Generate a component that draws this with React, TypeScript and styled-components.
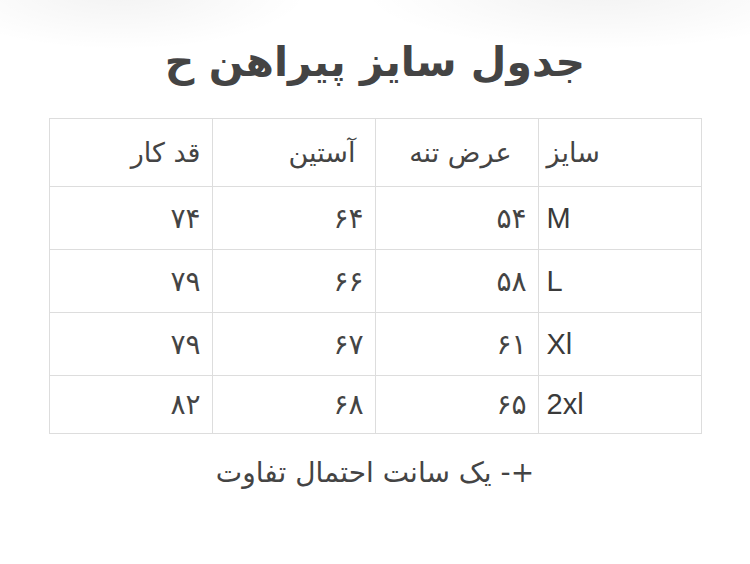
import React from 'react';
import styled, { createGlobalStyle } from 'styled-components';

const GlobalStyle = createGlobalStyle`
  html, body {
    margin: 0;
    padding: 0;
    background: #fff;
  }
  body {
    font-family: "DejaVu Sans", "Noto Sans", sans-serif;
    color: #444;
  }
`;

const Page = styled.div`
  width: 750px;
  height: 564px;
  box-sizing: border-box;
  direction: rtl;
  display: flex;
  flex-direction: column;
  align-items: center;
  padding-top: 32px;
  background:
    radial-gradient(ellipse 190px 60px at 120px -10px, rgba(0, 0, 0, 0.05), transparent),
    radial-gradient(ellipse 240px 60px at 600px -10px, rgba(0, 0, 0, 0.05), transparent),
    #fff;
`;

const Title = styled.h1`
  margin: 0;
  font-size: 41px;
  font-weight: bold;
  line-height: 60px;
  color: #444;
`;

const Table = styled.table`
  margin-top: 26px;
  width: 653px;
  border-collapse: collapse;
  table-layout: fixed;
`;

const Cell = styled.td<{ $head?: boolean; $h: number; $pad?: number; $first?: boolean }>`
  border: 1px solid #ddd;
  height: ${(p) => p.$h}px;
  padding: 0 ${(p) => p.$pad ?? 11}px 0 8px;
  text-align: ${(p) => (p.$first ? 'left' : 'right')};
  vertical-align: middle;
  font-size: ${(p) => (p.$head ? 27 : 28)}px;
  color: #444;
`;

const Latin = styled.span`
  font-family: "Liberation Sans", Arial, sans-serif;
  font-size: 29px;
  color: #3a3a3a;
`;

const Note = styled.p`
  margin: 22px 0 0;
  font-size: 28px;
  color: #444;
`;

const header = [
  { t: 'سایز', pad: 11 },
  { t: 'عرض تنه', pad: 26 },
  { t: 'آستین', pad: 19 },
  { t: 'قد کار', pad: 11 },
];
const rows = [
  ['M', '۵۴', '۶۴', '۷۴'],
  ['L', '۵۸', '۶۶', '۷۹'],
  ['Xl', '۶۱', '۶۷', '۷۹'],
  ['2xl', '۶۵', '۶۸', '۸۲'],
];
const heights = [62, 62, 62, 57];

export default function App() {
  return (
    <>
      <GlobalStyle />
      <Page>
        <Title>جدول سایز پیراهن ح</Title>
        <Table>
          <tbody>
            <tr>
              {header.map((h, j) => (
                <Cell key={h.t} $head $h={67} $pad={h.pad} $first={j === 0}>
                  {h.t}
                </Cell>
              ))}
            </tr>
            {rows.map((r, i) => (
              <tr key={r[0]}>
                {r.map((c, j) => (
                  <Cell key={j} $h={heights[i]} $first={j === 0}>
                    {j === 0 ? <Latin>{c}</Latin> : c}
                  </Cell>
                ))}
              </tr>
            ))}
          </tbody>
        </Table>
        <Note>+- یک سانت احتمال تفاوت</Note>
      </Page>
    </>
  );
}
